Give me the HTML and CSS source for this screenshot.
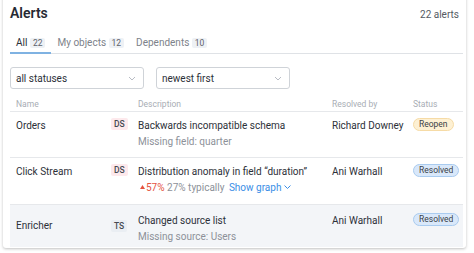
FILE: index.html
```
<html>
<head>
	<meta charset="utf-8">
	<link rel="stylesheet" href="styles.css">
</head>
<body>
	<div class="card">
		<div class="head">
			<div class="title">Alerts</div>
			<div class="total">22 alerts</div>
		</div>

		<div class="tabs">
			<div class="tab active">All <span class="count">22</span></div>
			<div class="tab">My objects <span class="count">12</span></div>
			<div class="tab">Dependents <span class="count">10</span></div>
		</div>

		<div class="filters">
			<div class="select">all statuses
				<svg width="8" height="5" viewBox="0 0 8 5"><path d="M1 1l3 3 3-3" fill="none" stroke="#b8bcc4" stroke-width="1"/></svg>
			</div>
			<div class="select">newest first
				<svg width="8" height="5" viewBox="0 0 8 5"><path d="M1 1l3 3 3-3" fill="none" stroke="#b8bcc4" stroke-width="1"/></svg>
			</div>
		</div>

		<div class="line header">
			<div class="cell">Name</div>
			<div class="cell"></div>
			<div class="cell">Description</div>
			<div class="cell">Resolved by</div>
			<div class="cell">Status</div>
		</div>

		<div class="line">
			<div class="cell name">Orders</div>
			<div class="cell"><span class="kind ds">DS</span></div>
			<div class="cell">
				<div class="desc">Backwards incompatible schema</div>
				<div class="sub">Missing field: quarter</div>
			</div>
			<div class="cell who">Richard Downey</div>
			<div class="cell"><span class="status reopen">Reopen</span></div>
		</div>

		<div class="line">
			<div class="cell name">Click Stream</div>
			<div class="cell"><span class="kind ds">DS</span></div>
			<div class="cell">
				<div class="desc">Distribution anomaly in field “duration”</div>
				<div class="sub"><span class="delta"><svg width="5" height="4" viewBox="0 0 5 4"><path d="M0 4L2.5 0 5 4z" fill="#e5533f"/></svg>57%</span> 27% typically <span class="more">Show graph <svg width="7" height="4" viewBox="0 0 7 4"><path d="M0.5 0.5l3 3 3-3" fill="none" stroke="#3a8ee6" stroke-width="1"/></svg></span></div>
			</div>
			<div class="cell who">Ani Warhall</div>
			<div class="cell"><span class="status resolved">Resolved</span></div>
		</div>

		<div class="line selected">
			<div class="cell name">Enricher</div>
			<div class="cell mid"><span class="kind ts">TS</span></div>
			<div class="cell top">
				<div class="desc">Changed source list</div>
				<div class="sub">Missing source: Users</div>
			</div>
			<div class="cell top who">Ani Warhall</div>
			<div class="cell top"><span class="status resolved">Resolved</span></div>
		</div>
	</div>
</body>
</html>
```

FILE: styles.css
```
html {
  box-sizing: border-box;
}
*, *:before, *:after {
  box-sizing: inherit;
}

body {
	font-family: Roboto, "Liberation Sans", sans-serif;
	background: #fff;
	margin: 0;
	color: #2c3038;
}

.card {
	margin: -6px 8px 0 3px;
	padding: 6px 3px 1px 7px;
	background: #fff;
	box-shadow: 0 1px 3px rgba(0,0,0,0.25);
	border-radius: 0 0 3px 3px;
}

.head {
	display: flex;
	justify-content: space-between;
	align-items: baseline;
	padding: 5px 4px 0 0;
	height: 22px;
}
.title {
	font-size: 14px;
	line-height: 17px;
	font-weight: 600;
	color: #262a33;
}
.total {
	font-size: 10px;
	color: #555a62;
}

.tabs {
	display: flex;
	border-bottom: 1px solid #dfe2e6;
}
.tab {
	font-size: 10px;
	line-height: 12px;
	color: #7d828a;
	padding: 15px 6px 5px 6px;
	margin-bottom: -1px;
}
.tab.active {
	color: #2c3038;
	border-bottom: 2px solid #7fb2e2;
	padding-bottom: 3px;
}
.count {
	display: inline-block;
	font-size: 8.5px;
	line-height: 10px;
	background: #eef1f5;
	color: #5d626a;
	padding: 0 3px;
	border-radius: 2px;
}

.filters {
	display: flex;
	gap: 12px;
	padding: 13px 0 0 0;
}
.select {
	width: 134px;
	height: 22px;
	border: 1px solid #cfd3d8;
	border-radius: 3px;
	font-size: 10px;
	color: #2c3038;
	padding: 0 7px 0 5px;
	display: flex;
	align-items: center;
	justify-content: space-between;
}

.line {
	display: grid;
	grid-template-columns: 95px 27px 194px 81px 1fr;
	padding: 0 0 0 6px;
	border-bottom: 1px solid #e6e8eb;
	font-size: 10px;
}
.line:last-child {
	border-bottom: none;
}
.line.header {
	font-size: 8.5px;
	line-height: 11px;
	color: #a8adb4;
	padding-top: 10px;
	padding-bottom: 1px;
}
.line:not(.header) {
	padding-top: 6px;
	padding-bottom: 7px;
	line-height: 16px;
}
.line:nth-child(6) {
	padding-bottom: 8px;
}
.line.selected {
	background: #f3f5f8;
	padding-top: 2px;
	padding-bottom: 2px;
}
.line.selected .name, .line.selected .mid {
	align-self: center;
}
.line.selected .top {
	padding-top: 6px;
}
.cell.name {
	color: #2c3038;
}
.desc {
	color: #2c3038;
}
.sub {
	color: #8d9199;
}
.who {
	color: #2c3038;
}

.kind {
	display: inline-block;
	vertical-align: middle;
	font-size: 8.5px;
	font-weight: 500;
	line-height: 12px;
	padding: 0 3px;
	border-radius: 2px;
	color: #454a52;
}
.kind.ds {
	background: #fde9ec;
}
.kind.ts {
	background: #eaeef3;
}

.status {
	display: inline-block;
	vertical-align: middle;
	font-size: 8.5px;
	line-height: 11px;
	padding: 0 5px;
	border-radius: 7px;
	color: #3a3f47;
}
.status.reopen {
	background: #fdf0d3;
	border: 1px solid #f6dba6;
}
.status.resolved {
	background: #d9e8fa;
	border: 1px solid #a9cbef;
}

.delta {
	color: #e5533f;
}
.delta svg {
	vertical-align: 2px;
	margin: 0 1px 0 2px;
}
.more {
	color: #3a8ee6;
	margin-left: 2px;
}
.more svg {
	vertical-align: 2px;
}
```
